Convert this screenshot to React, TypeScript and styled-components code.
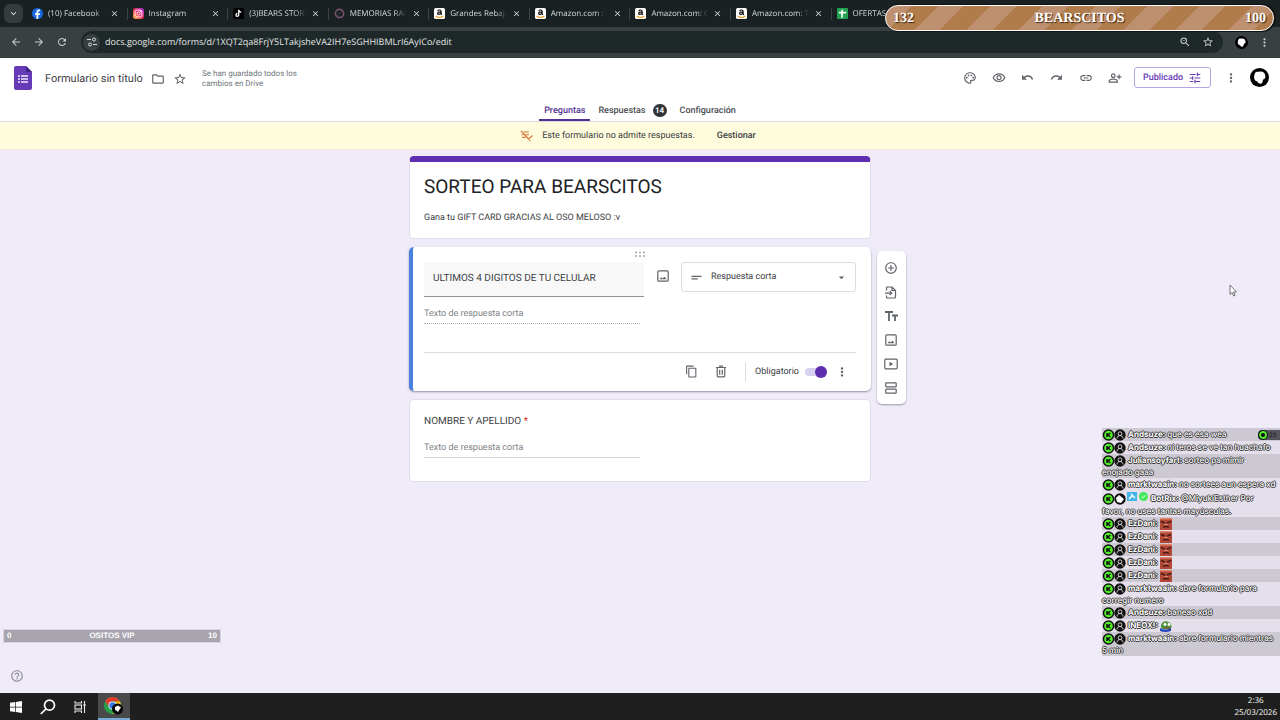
import React from "react";
import styled, { createGlobalStyle, css } from "styled-components";
import {
  MdArrowBack, MdArrowForward, MdRefresh, MdClose, MdKeyboardArrowDown, MdZoomOut, MdStarBorder, MdMoreVert,
  MdOutlinePalette, MdOutlineVisibility, MdUndo, MdRedo, MdLink, MdOutlinePersonAddAlt, MdTune,
  MdContentCopy, MdShortText, MdArrowDropDown, MdAddCircleOutline, MdHelpOutline, MdOutlineFolder,
} from "react-icons/md";

const ui = `"Open Sans", "Noto Sans", sans-serif`;
const roboto = `Roboto, "Liberation Sans", sans-serif`;
const inter = `Inter, Roboto, sans-serif`;

const Global = createGlobalStyle`
  * { box-sizing: border-box; }
  body { margin: 0; font-family: ${roboto}; color: #3c4043; text-rendering: geometricPrecision; }
  button, input, select { font: inherit; color: inherit; border: 0; padding: 0; margin: 0; background: none; outline: none; text-rendering: inherit; }
  svg { display: block; flex: none; }
`;

const Page = styled.div`
  position: relative;
  min-height: 100vh;
  display: flex;
  flex-direction: column;
  background: #f0ebf8;
  overflow: hidden;
`;

/* Browser frame */
const TabStrip = styled.div`
  display: flex;
  align-items: center;
  height: 27px;
  padding: 0 348px 0 4px;
  background: #1a2122;
  font-family: ${ui};
`;
const TabSearch = styled.button`
  display: grid;
  place-items: center;
  flex: none;
  width: 19px;
  height: 19px;
  margin-right: 4px;
  border-radius: 6px;
  background: #343c3d;
  color: #e4e8e8;
`;
const Tab = styled.div`
  flex: 1 1 0;
  min-width: 0;
  display: flex;
  align-items: center;
  gap: 5px;
  height: 12px;
  padding: 0 7px 0 5px;
  border-right: 1px solid #3b4344;
  &:last-child { border-color: transparent; }
`;
const TabTitle = styled.span`
  flex: 1;
  min-width: 0;
  overflow: hidden;
  white-space: nowrap;
  font-size: 8px;
  line-height: 12px;
  color: #d5dada;
  mask-image: linear-gradient(to right, #000 80%, transparent);
`;
const TabClose = styled.button`
  display: grid;
  place-items: center;
  width: 10px;
  height: 10px;
  color: #d5dada;
`;
const Toolbar = styled.div`
  display: flex;
  align-items: center;
  height: 31px;
  padding: 0 4px 1px;
  background: #394041;
  color: #c9cece;
`;
const NavButton = styled.button`
  display: grid;
  place-items: center;
  width: 23px;
  height: 20px;
`;
const Address = styled.div`
  flex: 1;
  display: flex;
  align-items: center;
  height: 22px;
  margin: 0 7px 0 8px;
  padding: 0 4px 0 2px;
  border-radius: 11px;
  background: #1f2829;
`;
const SiteInfo = styled.button`
  display: grid;
  place-items: center;
  width: 17px;
  height: 17px;
  margin-right: 5px;
  border-radius: 50%;
  background: #394041;
`;
const Url = styled.input`
  flex: 1;
  min-width: 0;
  font-family: ${ui};
  font-size: 9px;
  line-height: 14px;
  color: #e3e7e7;
`;

/* Forms header */
const Header = styled.header`
  background: #fff;
  border-bottom: 1px solid #dadce0;
`;
const HeaderRow = styled.div`
  display: flex;
  align-items: center;
  height: 39px;
  padding: 0 11px 0 14px;
  color: #5f6368;
`;
const DocName = styled.input`
  width: 102px;
  margin: 2px 0 0 13px;
  font-size: 11px;
  line-height: 16px;
  color: #3c4043;
`;
const PlainButton = styled.button`
  display: grid;
  place-items: center;
  width: 22px;
  height: 20px;
  margin-top: 3px;
`;
const Saved = styled.span`
  width: 100px;
  margin: 2px 0 0 11px;
  font-size: 8px;
  line-height: 10px;
  color: #70757a;
`;
const Actions = styled.div`
  display: flex;
  align-items: center;
  margin-left: auto;
`;
const Action = styled.button`
  display: grid;
  place-items: center;
  width: 29px;
  height: 24px;
`;
const Publish = styled.button`
  display: flex;
  align-items: center;
  justify-content: center;
  gap: 5px;
  width: 77px;
  height: 21px;
  margin: 0 5px;
  border: 1px solid #b9a5e3;
  border-radius: 3px;
  font-size: 9px;
  font-weight: 500;
  color: #673ab7;
`;
const Avatar = styled.button`
  display: block;
  margin-left: 5px;
`;
const Tabs = styled.nav`
  display: flex;
  justify-content: center;
  gap: 3px;
  height: 24px;
`;
const FormTab = styled.a<{ $active?: boolean }>`
  display: flex;
  align-items: center;
  gap: 7px;
  padding: 5px 5px 0;
  border-bottom: 2px solid ${(p) => (p.$active ? "#51318f" : "transparent")};
  color: ${(p) => (p.$active ? "#51318f" : "#4b4f53")};
  font-size: 9px;
  font-weight: 500;
  line-height: 12px;
  text-decoration: none;
`;
const Count = styled.span`
  min-width: 14px;
  border-radius: 7px;
  background: #313438;
  color: #fff;
  font-size: 8px;
  font-weight: 600;
  line-height: 13px;
  text-align: center;
`;
const Notice = styled.div`
  display: flex;
  align-items: center;
  justify-content: center;
  height: 28px;
  padding-right: 4px;
  border-bottom: 1px solid #f0e6e4;
  background: #fefcdc;
  font-size: 9px;
  color: #3c4043;
`;
const NoticeText = styled.span`
  margin: 0 22px 0 9px;
`;
const NoticeButton = styled.button`
  font-weight: 500;
`;

/* Form editor */
const Main = styled.main`
  flex: 1;
  display: grid;
  grid-template-columns: 1fr minmax(0, 462px) 1fr;
  align-items: start;
  padding: 6px 0 120px;
`;
const Column = styled.div`
  grid-column: 2;
  display: flex;
  flex-direction: column;
  gap: 8px;
`;
const Card = styled.section<{ $kind?: "title" | "active" }>`
  padding: 14px 14px 23px;
  border: 1px solid #e0dce8;
  border-radius: 5px;
  background: #fff;
  ${(p) => p.$kind === "title" && css`
    padding: 12px 14px 13px;
    border-top: 6px solid #5f2db0;
  `}
  ${(p) => p.$kind === "active" && css`
    padding: 4px 15px 7px 11px;
    border: 0;
    border-left: 4px solid #4a80dd;
    box-shadow: 0 1px 2px rgba(60, 55, 80, 0.5);
  `}
`;
const FormTitle = styled.input`
  display: block;
  width: 100%;
  height: 24px;
  font-size: 19px;
  color: #202124;
`;
const FormDescription = styled.input`
  display: block;
  width: 100%;
  height: 14px;
  margin: 13px 0 0;
  font-size: 9px;
  color: #3c4043;
`;
const Drag = styled.div`
  display: flex;
  justify-content: center;
  height: 7px;
  color: #9a9ea3;
`;
const QuestionRow = styled.div`
  display: flex;
  align-items: flex-start;
  margin-top: 4px;
`;
const Question = styled.input`
  width: 220px;
  height: 35px;
  padding: 0 9px 1px;
  border-bottom: 1px solid #8f9296;
  background: #f8f8f9;
  font-size: 10px;
`;
const ImageButton = styled.button`
  display: grid;
  place-items: center;
  flex: 1;
  height: 28px;
  color: #5f6368;
`;
const TypePicker = styled.label`
  display: grid;
  grid-template-columns: 29px 1fr 28px;
  align-items: center;
  justify-items: center;
  width: 175px;
  height: 30px;
  border: 1px solid #dadce0;
  border-radius: 3px;
  color: #5f6368;
`;
const TypeSelect = styled.select`
  width: 100%;
  height: 28px;
  appearance: none;
  font-size: 9px;
  color: #3c4043;
`;
const Answer = styled.input<{ $dotted?: boolean }>`
  display: block;
  width: 216px;
  height: 20px;
  margin-top: ${(p) => (p.$dotted ? 7 : 8)}px;
  padding-top: 1px;
  border-bottom: 1px ${(p) => (p.$dotted ? "dotted" : "solid")} ${(p) => (p.$dotted ? "#aaadb2" : "#d5d6da")};
  font-size: 9px;
  &::placeholder { color: #7f8387; opacity: 1; }
`;
const CardFooter = styled.div`
  display: flex;
  align-items: center;
  justify-content: flex-end;
  height: 32px;
  margin-top: 28px;
  padding-top: 6px;
  border-top: 1px solid #dadce0;
  color: #5f6368;
`;
const FooterButton = styled.button`
  display: grid;
  place-items: center;
  width: 29px;
  height: 22px;
`;
const Required = styled.label`
  display: flex;
  align-items: center;
  gap: 6px;
  height: 20px;
  margin-left: 10px;
  padding-left: 9px;
  border-left: 1px solid #dadce0;
  font-size: 9px;
  color: #3c4043;
`;
const Switch = styled.input`
  appearance: none;
  display: flex;
  align-items: center;
  width: 22px;
  height: 8px;
  border-radius: 4px;
  background: #d9cff0;
  &::after {
    content: "";
    width: 12px;
    height: 12px;
    margin-left: auto;
    border-radius: 50%;
    background: #5f2db0;
  }
`;
const QuestionLabel = styled.label`
  display: block;
  font-size: 10px;
  line-height: 16px;
  span { color: #d93025; }
`;
const SideTools = styled.aside`
  display: flex;
  flex-direction: column;
  width: 29px;
  margin: 95px 0 0 6px;
  padding: 5px 1px 4px 0;
  border-radius: 5px;
  background: #fff;
  box-shadow: 0 1px 2px rgba(60, 55, 80, 0.45);
  color: #5f6368;
`;
const SideTool = styled.button`
  display: grid;
  place-items: center;
  height: 24px;
`;

/* Stream overlays */
const GoalBar = styled.div`
  position: absolute;
  top: 5px;
  right: 6px;
  width: 389px;
  height: 26px;
  display: grid;
  grid-template-columns: 1fr auto 1fr;
  align-items: center;
  padding: 2px 7px 0;
  border: 1px solid #fff;
  border-radius: 13px;
  background: repeating-linear-gradient(135deg, #be9070 0 18px, #b07c4b 18px 37px);
  box-shadow: 1px 0 0 1px #141414;
  font: bold 14px/22px "Liberation Serif", serif;
  color: #fff;
  text-shadow: 1px 1px 1px #3b2614;
  span:last-child { text-align: right; }
`;
const VipBar = styled.div`
  position: absolute;
  left: 3px;
  bottom: 77px;
  width: 218px;
  height: 14px;
  display: grid;
  grid-template-columns: 1fr auto 1fr;
  align-items: center;
  padding: 0 3px;
  border: 1px solid #d8d4df;
  background: #a7a4ae;
  font: bold 8px/12px "Liberation Sans", sans-serif;
  color: #fff;
  span:last-child { text-align: right; }
`;
const Help = styled.button`
  position: absolute;
  left: 10px;
  bottom: 37px;
  color: #8d8a97;
`;
const Cursor = styled.svg`
  position: absolute;
  top: 284px;
  right: 43px;
`;
const Chat = styled.ul`
  position: absolute;
  right: 0;
  bottom: 64px;
  width: 178px;
  margin: 0;
  padding: 0;
  list-style: none;
  font-family: ${inter};
  font-size: 8px;
  font-weight: 500;
  line-height: 11px;
  color: #fff;
  text-shadow: 1px 0 #333, -1px 0 #333, 0 1px #333, 0 -1px #333;
`;
const Message = styled.li<{ $dark: boolean }>`
  background: ${(p) => (p.$dark ? "#cdc9d3" : "#e4dfea")};
`;
const Line = styled.div<{ $tall?: boolean }>`
  display: flex;
  align-items: center;
  gap: 2px;
  height: ${(p) => (p.$tall ? 15 : 13)}px;
  white-space: nowrap;
  b { font-weight: 700; }
`;
const Rest = styled.div`
  height: 11px;
  line-height: 10px;
  white-space: nowrap;
`;
const Viewers = styled.div`
  position: absolute;
  right: 0;
  bottom: 280px;
  display: flex;
  align-items: center;
  gap: 1px;
  width: 22px;
  height: 10px;
  border-radius: 4px 0 0 4px;
  background: #55535c;
  font: 6px/9px ${inter};
  color: #16181a;
`;

/* Windows taskbar */
const Taskbar = styled.footer`
  display: flex;
  align-items: center;
  height: 27px;
  padding-right: 3px;
  background: #1e1f1e;
  color: #fff;
`;
const TaskButton = styled.button<{ $active?: boolean }>`
  display: grid;
  place-items: center;
  width: 32px;
  height: 27px;
  ${(p) => p.$active && css`
    margin-left: 2px;
    border-bottom: 2px solid #76a9d8;
    background: #484a4a;
  `}
`;
const Clock = styled.time`
  margin-left: auto;
  font-family: ${ui};
  font-size: 8px;
  line-height: 12px;
  text-align: center;
`;

const Facebook = () => (
  <svg width="11" height="11" viewBox="0 0 24 24"><circle cx="12" cy="12" r="12" fill="#1769e0" />
    <path d="M13.6 24v-9h3.2l.6-3.8h-3.8V9c0-1.200.5-2 2.200-2h1.800V3.700c-4.600-.9-7.800.5-7.800 5v2.500H6.600V15h3.200v9z" fill="#fff" /></svg>
);
const Instagram = () => (
  <svg width="11" height="11" viewBox="0 0 24 24">
    <defs><linearGradient id="ig" x1="0" y1="1" x2="1" y2="0"><stop offset="0" stopColor="#ffc234" /><stop offset=".45" stopColor="#f5315c" /><stop offset="1" stopColor="#a02bdb" /></linearGradient></defs>
    <rect width="24" height="24" rx="6" fill="url(#ig)" />
    <rect x="4.500" y="4.500" width="15" height="15" rx="4.500" fill="none" stroke="#fff" strokeWidth="2" />
    <circle cx="12" cy="12" r="3.500" fill="none" stroke="#fff" strokeWidth="2" /><circle cx="16.500" cy="7.500" r="1.200" fill="#fff" /></svg>
);
const TikTok = () => (
  <svg width="11" height="11" viewBox="0 0 24 24"><rect width="24" height="24" rx="2" fill="#000" />
    <path d="M12.500 4v11a3 3 0 1 1-3-3M12.500 4c.3 3 2.200 4.800 5.500 5" fill="none" stroke="#fff" strokeWidth="2.800" /></svg>
);
const Ring = () => (
  <svg width="11" height="11" viewBox="0 0 24 24"><circle cx="12" cy="12" r="9" fill="none" stroke="#76506f" strokeWidth="3.500" /><path d="M6 18 18 6" stroke="#4b3448" strokeWidth="2" /></svg>
);
const Amazon = () => (
  <svg width="11" height="11" viewBox="0 0 24 24"><rect width="24" height="24" rx="4" fill="#fff" />
    <path d="M8 6.500c1.500-3 7.500-3 7.500 1V13l1.500 2M15 8.500c-4 0-7 .5-7 3.300 0 3.200 6 3 7-1" fill="none" stroke="#161616" strokeWidth="2.700" />
    <path d="M3.500 17.500c5 4 12 4 17 0" fill="none" stroke="#f29a1d" strokeWidth="2.300" /></svg>
);
const Sheets = () => (
  <svg width="11" height="11" viewBox="0 0 24 24"><rect width="24" height="24" rx="2" fill="#20a252" /><path d="M4 10h16M11 4v17" stroke="#fff" strokeWidth="3.500" /></svg>
);
const FormsLogo = () => (
  <svg width="18" height="24" viewBox="0 0 18 24"><path d="M2 0h10l6 6v16a2 2 0 0 1-2 2H2a2 2 0 0 1-2-2V2a2 2 0 0 1 2-2z" fill="#673ab7" /><path d="M12 0l6 6h-6z" fill="#3f2382" />
    <path d="M4 10h2M4 13h2M4 16h2M7 10h7M7 13h7M7 16h7" stroke="#f2ecfb" strokeWidth="1.400" /></svg>
);
const SiteControls = () => (
  <svg width="10" height="10" viewBox="0 0 10 10" fill="none" stroke="#d4d9d9" strokeWidth="1"><path d="M0 2.500h4M6 7.500h4" /><circle cx="7" cy="2.500" r="1.500" /><circle cx="3" cy="7.500" r="1.500" /></svg>
);
const Bear = ({ size }: { size: number }) => (
  <svg width={size} height={size} viewBox="0 0 20 20"><circle cx="10" cy="10" r="10" fill="#000" />
    <path d="M5.500 5c1.200-1.500 2.500-.8 4-1C12.500 3 16.500 5 16 8.500c.8 2-.5 3-2 3.500-.8 1-.5 3-1.700 4.300-1.300.4-3.300 0-4.300-1.300.3-1.500-2-1-3-2.500C4 10.500 4 7.500 5.500 5z" fill="#fff" /></svg>
);
const NoAnswers = () => (
  <svg width="13" height="12" viewBox="0 0 13 12" fill="none" stroke="#d9763c" strokeWidth="1.100"><path d="M1 1l9.500 10M3.500 2h5.500M1.500 4.700h1.700M5.500 4.700H9M2 7.400h3.500M8 9.500l4.500-4" /></svg>
);
const Picture = () => (
  <svg width="12" height="12" viewBox="0 0 12 12" fill="none" stroke="#5f6368" strokeWidth="1.200"><rect x=".8" y=".8" width="10.400" height="10.400" rx="1" /><path d="M2.500 9.300l1.700-2 1.300 1.300L7.500 6.800 9.600 9.300z" fill="#5f6368" stroke="none" /></svg>
);
const Trash = () => (
  <svg width="12" height="13" viewBox="0 0 12 13" fill="none" stroke="#5f6368" strokeWidth="1.200"><path d="M1 2.500h10M4 1.200h4M2.200 2.500v8.300q0 1 1 1h5.600q1 0 1-1V2.500M4.700 4.700v5M7.300 4.700v5" /></svg>
);
const ImportQuestion = () => (
  <svg width="12" height="13" viewBox="0 0 12 13" fill="none" stroke="#5f6368" strokeWidth="1.200"><path d="M1.500 4.500V2q0-1 1-1H7l3.500 3.500V11q0 1-1 1h-7q-1 0-1-1V9.500M7 1v3.500h3.500M0 7.200h6.500M4.700 5.200l2 2-2 2" /></svg>
);
const TitleText = () => (
  <svg width="13" height="12" viewBox="0 0 13 12" fill="none" stroke="#5f6368" strokeWidth="1.800"><path d="M0 2h8M4 2v9M7 5.500h6M10 5.500V11" /></svg>
);
const Video = () => (
  <svg width="14" height="12" viewBox="0 0 14 12" fill="none" stroke="#5f6368" strokeWidth="1.200"><rect x=".8" y="1.200" width="12.400" height="9.600" rx="1" /><path d="M5.500 3.800v4.400L9.300 6z" fill="#5f6368" stroke="none" /></svg>
);
const Section = () => (
  <svg width="12" height="12" viewBox="0 0 12 12" fill="none" stroke="#5f6368" strokeWidth="1.200"><rect x=".8" y=".8" width="10.400" height="4" rx=".5" /><rect x=".8" y="7.200" width="10.400" height="4" rx=".5" /></svg>
);
const Badges = ({ bot }: { bot?: boolean }) => (
  <svg width={bot ? 47 : 24} height="13" viewBox={bot ? "0 0 47 13" : "0 0 24 13"}>
    <circle cx="6.500" cy="7" r="5.800" fill="#111" /><circle cx="6.500" cy="7" r="4.300" fill="#55f22c" /><path d="M5 5v4M8.300 5 6 7l2.300 2" stroke="#111" strokeWidth="1.500" fill="none" />
    <circle cx="18" cy="7" r="5.700" fill="#111" />
    {bot ? (
      <><path d="M14 6l3-3 5 4-3 4-4-1z" fill="#fff" /><rect x="25" y="0" width="10" height="9" fill="#3fb5e8" /><path d="M27 7l4-4M29 2l4 4" stroke="#fff" strokeWidth="1.500" /><circle cx="41.500" cy="4.500" r="4.500" fill="#43e85c" /><path d="M39.500 4.500l1.500 1.500 2.500-3" stroke="#d8ffdc" fill="none" /></>
    ) : (
      <><circle cx="18" cy="5.700" r="1.900" fill="none" stroke="#ddd" strokeWidth=".9" /><path d="M15 10.500c0-4 6-4 6 0" fill="none" stroke="#ddd" strokeWidth=".9" /></>
    )}
  </svg>
);
const AngryEmote = () => (
  <svg width="12" height="12" viewBox="0 0 12 12"><rect width="12" height="12" fill="#b24938" /><path d="M1 3.500l4 1.500M11 3.500L7 5M3 9.500q3-2 6 0" stroke="#481c19" strokeWidth="1.400" fill="none" /><path d="M0 0h12v1.500H0zM4 6h4v1H4z" fill="#dd8469" /></svg>
);
const FrogEmote = () => (
  <svg width="12" height="12" viewBox="0 0 12 12"><path d="M1 7c0-5 4-7 7-5 3 0 4 4 3 7H2z" fill="#4b9140" /><path d="M0 8q5 3 11 0v3q-6 2-11 0z" fill="#2545bd" /><circle cx="5" cy="4.500" r="1.400" fill="#fff" /><circle cx="9" cy="4.500" r="1.400" fill="#fff" /><path d="M4 8h6" stroke="#9b3e2b" /></svg>
);
const WindowsLogo = () => (
  <svg width="12" height="12" viewBox="0 0 12 12" fill="#fff"><path d="M0 1.800l5.300-.8v4.700H0zM6 .9L12 0v5.700H6zM0 6.400h5.300v4.700L0 10.300zM6 6.400h6V12l-6-.9z" /></svg>
);
const SearchIcon = () => (
  <svg width="16" height="16" viewBox="0 0 16 16" fill="none" stroke="#fff" strokeWidth="1.700"><circle cx="9.500" cy="6.200" r="5" /><path d="M6 9.800L.8 15" /></svg>
);
const TaskView = () => (
  <svg width="12" height="12" viewBox="0 0 12 12" fill="none" stroke="#e8e8e8" strokeWidth="1.100"><path d="M1 0v2h6.500V0M1 12v-2h6.500v2M10.500 0v12" /><rect x="1" y="4" width="6.500" height="4" /><path d="M9.500 4h2" strokeWidth="2" /></svg>
);
const Chrome = () => (
  <svg width="20" height="18" viewBox="0 0 20 18"><circle cx="8.500" cy="8.500" r="8.500" fill="#27a04c" /><path d="M1.200 4.200A8.500 8.500 0 0 1 16 4.500H8.500L5 10z" fill="#e33b2e" /><path d="M16 4.500A8.500 8.500 0 0 1 8.500 17l4-7-1-5.500z" fill="#fbc116" />
    <circle cx="8.500" cy="8.500" r="4" fill="#fff" /><circle cx="8.500" cy="8.500" r="3.200" fill="#3478e5" /><circle cx="13.500" cy="12" r="5.500" fill="#050505" /><path d="M11 10l3-1.500 3 2-1.500 2L14 15l-1.500-1.500L11 13z" fill="#fff" /></svg>
);

const browserTabs = [
  { title: "(10) Facebook", icon: <Facebook /> },
  { title: "Instagram", icon: <Instagram /> },
  { title: "(3)BEARS STORE", icon: <TikTok /> },
  { title: "MEMORIAS RAM", icon: <Ring /> },
  { title: "Grandes Rebajas", icon: <Amazon /> },
  { title: "Amazon.com : s", icon: <Amazon /> },
  { title: "Amazon.com: G", icon: <Amazon /> },
  { title: "Amazon.com: T", icon: <Amazon /> },
  { title: "OFERTAS", icon: <Sheets />, open: true },
];

type ChatMessage = { user: string; text?: string; rest?: string; emote?: "angry" | "frog"; bot?: boolean; dark?: boolean };
const messages: ChatMessage[] = [
  { user: "Andsuze", text: "que es esa wea", dark: true },
  { user: "Andsuze", text: "ni teros se ve tan huachafo" },
  { user: "Juliansoyfart", text: "sorteo pa mimir", rest: "enojado gaaa", dark: true },
  { user: "marktwaain", text: "no sortees aun espera xd" },
  { user: "BotRix", text: "@MiyukiEsther Por", rest: "favor, no uses tantas mayúsculas.", bot: true },
  { user: "EzDani", emote: "angry", dark: true },
  { user: "EzDani", emote: "angry" },
  { user: "EzDani", emote: "angry", dark: true },
  { user: "EzDani", emote: "angry" },
  { user: "EzDani", emote: "angry", dark: true },
  { user: "marktwaain", text: "abre formulario para", rest: "corregir numero" },
  { user: "Andsuze", text: "baneao xdd", dark: true },
  { user: "INEOX!", emote: "frog" },
  { user: "marktwaain", text: "abre formulario mientras", rest: "5 min", dark: true },
];

const actions = [
  { label: "Personalizar tema", icon: <MdOutlinePalette size={14} /> },
  { label: "Vista previa", icon: <MdOutlineVisibility size={14} /> },
  { label: "Deshacer", icon: <MdUndo size={13} /> },
  { label: "Rehacer", icon: <MdRedo size={13} /> },
  { label: "Copiar enlace", icon: <MdLink size={14} /> },
  { label: "Compartir", icon: <MdOutlinePersonAddAlt size={14} /> },
];

const sideTools = [
  { label: "Añadir pregunta", icon: <MdAddCircleOutline size={14} /> },
  { label: "Importar preguntas", icon: <ImportQuestion /> },
  { label: "Añadir título y descripción", icon: <TitleText /> },
  { label: "Añadir imagen", icon: <Picture /> },
  { label: "Añadir vídeo", icon: <Video /> },
  { label: "Añadir sección", icon: <Section /> },
];

export default function App() {
  return (
    <Page>
      <Global />
      <TabStrip>
        <TabSearch aria-label="Buscar pestañas"><MdKeyboardArrowDown size={11} /></TabSearch>
        {browserTabs.map((t, i) => (
          <Tab key={i}>
            {t.icon}
            <TabTitle>{t.title}</TabTitle>
            {!t.open && <TabClose aria-label="Cerrar pestaña"><MdClose size={9} /></TabClose>}
          </Tab>
        ))}
      </TabStrip>
      <Toolbar>
        <NavButton aria-label="Atrás"><MdArrowBack size={12} /></NavButton>
        <NavButton aria-label="Adelante"><MdArrowForward size={12} /></NavButton>
        <NavButton aria-label="Recargar"><MdRefresh size={12} /></NavButton>
        <Address>
          <SiteInfo aria-label="Información del sitio"><SiteControls /></SiteInfo>
          <Url aria-label="Dirección" defaultValue="docs.google.com/forms/d/1XQT2qa8FrjY5LTakjsheVA2IH7eSGHHIBMLrI6AyICo/edit" />
          <NavButton aria-label="Zoom"><MdZoomOut size={12} /></NavButton>
          <NavButton aria-label="Añadir a favoritos"><MdStarBorder size={12} /></NavButton>
        </Address>
        <NavButton aria-label="Perfil"><Bear size={13} /></NavButton>
        <NavButton aria-label="Menú"><MdMoreVert size={13} /></NavButton>
      </Toolbar>

      <Header>
        <HeaderRow>
          <FormsLogo />
          <DocName aria-label="Nombre del formulario" defaultValue="Formulario sin título" />
          <PlainButton aria-label="Mover"><MdOutlineFolder size={14} /></PlainButton>
          <PlainButton aria-label="Destacar"><MdStarBorder size={14} /></PlainButton>
          <Saved>Se han guardado todos los cambios en Drive</Saved>
          <Actions>
            {actions.map((a) => <Action key={a.label} aria-label={a.label}>{a.icon}</Action>)}
            <Publish>Publicado<MdTune size={14} /></Publish>
            <Action aria-label="Más"><MdMoreVert size={14} /></Action>
            <Avatar aria-label="Cuenta"><Bear size={19} /></Avatar>
          </Actions>
        </HeaderRow>
        <Tabs>
          <FormTab href="#preguntas" $active>Preguntas</FormTab>
          <FormTab href="#respuestas">Respuestas<Count>14</Count></FormTab>
          <FormTab href="#configuracion">Configuración</FormTab>
        </Tabs>
      </Header>
      <Notice>
        <NoAnswers />
        <NoticeText>Este formulario no admite respuestas.</NoticeText>
        <NoticeButton>Gestionar</NoticeButton>
      </Notice>

      <Main>
        <Column>
          <Card $kind="title">
            <FormTitle aria-label="Título" defaultValue="SORTEO PARA BEARSCITOS" />
            <FormDescription aria-label="Descripción" defaultValue="Gana tu GIFT CARD GRACIAS AL OSO MELOSO :v" />
          </Card>
          <Card $kind="active">
            <Drag>
              <svg width="10" height="7" viewBox="0 0 10 7" fill="currentColor">
                {[1, 5, 9].map((x) => [1.5, 5].map((y) => <circle key={`${x}-${y}`} cx={x} cy={y} r=".9" />))}
              </svg>
            </Drag>
            <QuestionRow>
              <Question aria-label="Pregunta" defaultValue="ULTIMOS 4 DIGITOS DE TU CELULAR" />
              <ImageButton aria-label="Añadir imagen"><Picture /></ImageButton>
              <TypePicker>
                <MdShortText size={15} />
                <TypeSelect aria-label="Tipo de pregunta"><option>Respuesta corta</option></TypeSelect>
                <MdArrowDropDown size={13} />
              </TypePicker>
            </QuestionRow>
            <Answer $dotted aria-label="Respuesta" placeholder="Texto de respuesta corta" />
            <CardFooter>
              <FooterButton aria-label="Duplicar"><MdContentCopy size={13} /></FooterButton>
              <FooterButton aria-label="Eliminar"><Trash /></FooterButton>
              <Required>Obligatorio<Switch type="checkbox" role="switch" defaultChecked /></Required>
              <FooterButton aria-label="Más opciones"><MdMoreVert size={14} /></FooterButton>
            </CardFooter>
          </Card>
          <Card>
            <QuestionLabel htmlFor="nombre">NOMBRE Y APELLIDO <span>*</span></QuestionLabel>
            <Answer id="nombre" placeholder="Texto de respuesta corta" />
          </Card>
        </Column>
        <SideTools>
          {sideTools.map((t) => <SideTool key={t.label} aria-label={t.label}>{t.icon}</SideTool>)}
        </SideTools>
      </Main>

      <Taskbar>
        <TaskButton aria-label="Inicio"><WindowsLogo /></TaskButton>
        <TaskButton aria-label="Buscar"><SearchIcon /></TaskButton>
        <TaskButton aria-label="Vista de tareas"><TaskView /></TaskButton>
        <TaskButton aria-label="Chrome" $active><Chrome /></TaskButton>
        <Clock>2:36<br />25/03/2026</Clock>
      </Taskbar>

      <GoalBar><span>132</span><span>BEARSCITOS</span><span>100</span></GoalBar>
      <VipBar><span>0</span><span>OSITOS VIP</span><span>10</span></VipBar>
      <Help aria-label="Ayuda"><MdHelpOutline size={14} /></Help>
      <Cursor width="8" height="13" viewBox="0 0 8 13"><path d="M1 1v9.500l2.200-2 1.500 3.500 1.300-.6-1.500-3.400h3z" fill="#fff" stroke="#55525c" strokeWidth=".8" /></Cursor>
      <Chat>
        {messages.map((m, i) => (
          <Message key={i} $dark={!!m.dark}>
            <Line $tall={m.bot}>
              <Badges bot={m.bot} />
              <b>{m.user}:</b>
              {m.text && <span>{m.text}</span>}
              {m.emote === "angry" && <AngryEmote />}
              {m.emote === "frog" && <FrogEmote />}
            </Line>
            {m.rest && <Rest>{m.rest}</Rest>}
          </Message>
        ))}
      </Chat>
      <Viewers><svg width="10" height="10" viewBox="0 0 10 10"><circle cx="5" cy="5" r="5" fill="#111" /><circle cx="5" cy="5" r="3" fill="none" stroke="#55f22c" strokeWidth="1.800" /></svg>25</Viewers>
    </Page>
  );
}
